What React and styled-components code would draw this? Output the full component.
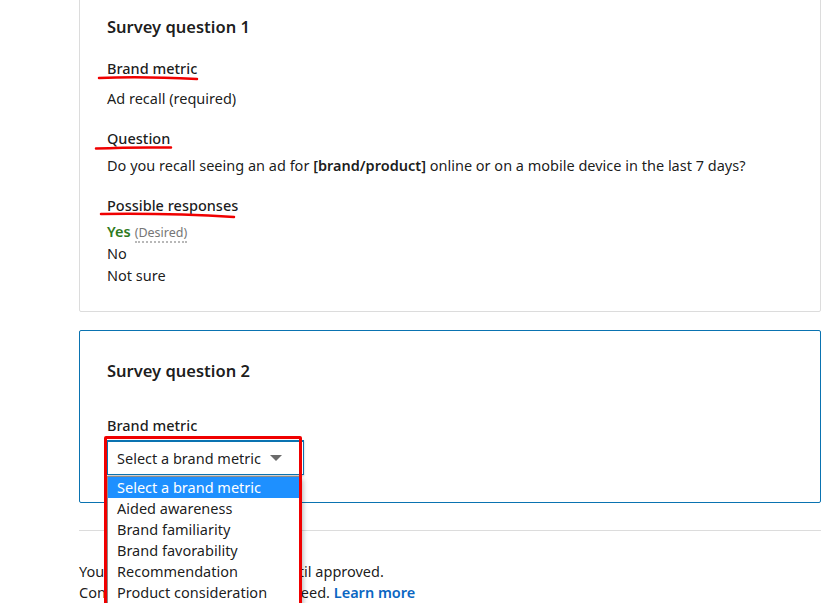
import React from "react";
import styled, { createGlobalStyle } from "styled-components";

const GlobalStyle = createGlobalStyle`
  html, body {
    margin: 0;
    padding: 0;
    background: #fff;
  }
  body {
    font-family: "Noto Sans", "Open Sans", sans-serif;
    color: rgba(0, 0, 0, 0.9);
    overflow: hidden;
  }
`;

const Page = styled.div`
  width: 742px;
  margin: -5px 0 0 79px;
  display: flex;
  flex-direction: column;
`;

const Card = styled.section`
  position: relative;
  box-sizing: border-box;
  border: 1px solid ${(p) => (p.$active ? "#0a73b1" : "#dcdcdc")};
  border-radius: 2px;
  padding: ${(p) => (p.$active ? "28px 27px 27px" : "19px 27px 25px")};
  margin-bottom: ${(p) => p.$mb || 0}px;
`;

const Heading = styled.h3`
  margin: 0;
  font-size: 16.5px;
  font-weight: 600;
  line-height: 24px;
`;

const Label = styled.div`
  font-size: 14.5px;
  font-weight: 500;
  line-height: 20px;
  margin-top: ${(p) => p.$mt}px;
`;

const Value = styled.div`
  font-size: 14.5px;
  line-height: ${(p) => p.$lh || 20}px;
  height: ${(p) => p.$lh || 20}px;
  margin-top: ${(p) => p.$mt || 0}px;

  strong {
    font-weight: 600;
  }
`;

const Yes = styled.span`
  color: #2f7a20;
  font-weight: 600;
`;

const Desired = styled.span`
  color: #767676;
  font-size: 12.5px;
  margin-left: 4px;
  border-bottom: 2px dotted #b8b8b8;
`;

const Marks = styled.svg`
  position: absolute;
  left: 0;
  top: 4px;
  pointer-events: none;
  overflow: visible;
`;

const SelectArea = styled.div`
  position: relative;
  margin-top: 5px;
  width: 197px;
`;

const SelectBox = styled.div`
  box-sizing: border-box;
  height: 35px;
  display: flex;
  align-items: center;
  justify-content: space-between;
  padding: 0 21px 0 9px;
  border: 1px solid #0a73b1;
  border-top-width: 2px;
  font-size: 14.5px;
  box-shadow: 0 1px 2px rgba(0, 0, 0, 0.25);
`;

const Caret = styled.span`
  width: 0;
  height: 0;
  border-left: 6px solid transparent;
  border-right: 6px solid transparent;
  border-top: 6px solid #6b6b6b;
`;

const List = styled.ul`
  position: absolute;
  left: 0;
  top: 36px;
  z-index: 2;
  box-sizing: border-box;
  width: 194px;
  margin: 0;
  padding: 0;
  list-style: none;
  background: #fff;
  border: 1px solid #8a8a8a;
  box-shadow: 2px 3px 5px rgba(0, 0, 0, 0.3);
`;

const Option = styled.li`
  height: 21px;
  line-height: 21px;
  padding-left: 9px;
  font-size: 14.5px;
  color: ${(p) => (p.$selected ? "#fff" : "rgba(0,0,0,0.9)")};
  background: ${(p) => (p.$selected ? "#1e90ff" : "transparent")};
`;

const RedFrame = styled.div`
  position: absolute;
  z-index: 3;
  left: -3px;
  top: -4px;
  width: 198px;
  height: 171px;
  box-sizing: border-box;
  border: 3px solid #f00000;
  border-radius: 2px;
  pointer-events: none;
`;

const Divider = styled.hr`
  margin: 27px 0 0;
  border: 0;
  border-top: 1px solid #dcdcdc;
`;

const Footer = styled.p`
  margin: 30px 0 0;
  font-size: 14.5px;
  line-height: 21px;
`;

const Link = styled.a`
  color: #0a66c2;
  font-weight: 600;
  text-decoration: none;
`;

const options = [
  "Select a brand metric",
  "Aided awareness",
  "Brand familiarity",
  "Brand favorability",
  "Recommendation",
  "Product consideration",
];

export default function App() {
  return (
    <>
      <GlobalStyle />
      <Page>
        <Card $mb={18}>
          <Heading>Survey question 1</Heading>
          <Label $mt={19}>Brand metric</Label>
          <Value $mt={10}>Ad recall (required)</Value>
          <Label $mt={20}>Question</Label>
          <Value $mt={7}>
            Do you recall seeing an ad for <strong>[brand/product]</strong> online or on a mobile device in the last 7 days?
          </Value>
          <Label $mt={20}>Possible responses</Label>
          <Value $mt={5} $lh={22}>
            <Yes>Yes</Yes>
            <Desired>(Desired)</Desired>
          </Value>
          <Value $lh={22}>No</Value>
          <Value $lh={22}>Not sure</Value>
          <Marks width="742" height="320">
            <path d="M19 78 Q60 76 117 79" stroke="#f00000" strokeWidth="2.5" fill="none" strokeLinecap="round" />
            <path d="M16 148.5 Q50 147 91 147.5" stroke="#f00000" strokeWidth="2.5" fill="none" strokeLinecap="round" />
            <path d="M21 214 Q90 213 154 217" stroke="#f00000" strokeWidth="2.5" fill="none" strokeLinecap="round" />
          </Marks>
        </Card>
        <Card $active>
          <Heading>Survey question 2</Heading>
          <Label $mt={32}>Brand metric</Label>
          <SelectArea>
            <SelectBox>
              <span>Select a brand metric</span>
              <Caret />
            </SelectBox>
            <List>
              {options.map((o, i) => (
                <Option key={o} $selected={i === 0}>
                  {o}
                </Option>
              ))}
            </List>
            <RedFrame />
          </SelectArea>
        </Card>
        <Divider />
        <Footer>
          Your campaigns won't be live until approved.
          <br />
          Content will be displayed in the feed. <Link href="#">Learn more</Link>
        </Footer>
      </Page>
    </>
  );
}
